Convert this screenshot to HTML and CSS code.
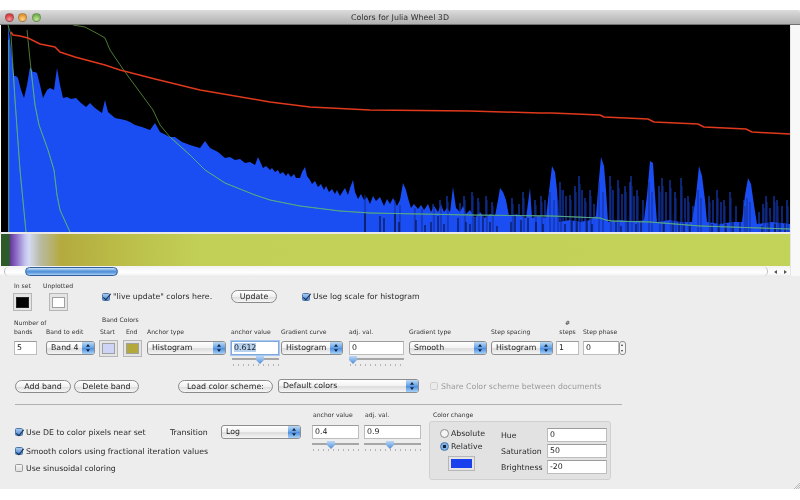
FILE: index.html
```html
<!DOCTYPE html>
<html lang="en">
<head>
<meta charset="utf-8">
<title>Colors for Julia Wheel 3D</title>
<link rel="stylesheet" href="styles.css">
</head>
<body>
<div class="window">
  <header class="titlebar">
    <div class="lights"><span class="light red"></span><span class="light amber"></span><span class="light green"></span></div>
    <div class="title">Colors for Julia Wheel 3D</div>
  </header>
  <section class="scroller">
    <div class="scroll-content">
      <svg class="plot" width="789" height="207" viewBox="1 25 789 207" aria-label="Histogram">
        <defs>
          <clipPath id="over"><polygon points="8,25 10,40 13,68 14,76 18,78 21,90 24,98 27,85 30,67 33,72 37,73 40,85 43,98 47,90 50,88 54,90 57,68 60,85 63,98 67,97 71,99 76,98 81,103 86,107 90,103 95,108 102,113 105,100 108,112 115,118 125,120 135,125 150,130 155,123 160,132 170,137 190,145 200,148 205,141 210,148 225,158 245,163 255,165 258,157 263,168 280,172 300,178 305,167 310,180 330,190 340,190 353,180 358,195 375,195 395,198 403,183 410,200 790,212 790,232 8,232"/></clipPath>
        </defs>
        <rect x="1" y="25" width="789" height="207" fill="#000"/>
        <polygon class="hist" points="8,25 10,40 13,68 14,76 16,76 18,78 21,90 24,98 27,85 30,67 33,72 35,72 37,73 40,85 43,98 47,90 50,88 54,90 57,68 60,85 63,98 67,97 71,99 76,98 81,103 86,107 90,103 95,108 102,113 105,100 108,112 115,118 120,119 125,120 130,122 135,125 142,127 150,130 155,123 160,132 170,137 175,137 182,142 190,145 200,148 205,141 210,148 218,152 225,158 230,157 235,160 240,159 245,163 250,162 255,165 258,157 263,168 266,166 270,170 272,168 275,172 278,170 280,174 283,172 286,176 288,173 291,177 294,174 296,178 300,178 302,172 305,167 307,176 310,180 312,184 315,181 318,187 321,184 324,190 326,186 329,192 332,189 335,194 337,190 340,196 343,191 345,188 348,195 350,188 353,180 355,192 358,199 361,194 364,200 367,197 370,204 373,196 376,201 380,197 384,206 387,199 390,204 393,198 397,206 400,200 403,183 406,190 408,198 411,208 414,204 418,209 421,205 424,210 428,204 431,212 434,206 438,212 441,205 444,212 447,208 450,212 453,187 456,208 460,212 463,206 466,214 470,210 475,218 480,212 485,218 490,214 495,216 498,200 500,188 503,192 506,200 509,216 516,214 526,218 530,188 532,218 538,216 546,218 548,200 552,166 555,172 557,190 559,222 570,220 580,222 590,220 596,216 598,190 601,157 604,166 606,190 608,222 620,220 632,222 644,220 647,195 650,161 653,163 655,195 657,222 670,220 680,222 692,222 696,195 699,166 702,176 705,200 707,222 720,224 732,222 742,222 745,195 748,178 751,184 754,205 757,224 772,222 790,224 790,232 8,232"/>
        <path class="bright" d="M414 205V232M421 206V232M433 204V232M440 200V232M447 196V232M460 203V232M464 196V232M472 192V232M478 198V232M486 196V232M492 202V232M512 198V232M519 204V232M523 192V232M535 200V232M541 196V232M545 200V232M560 182V232M563 190V232M566 196V232M570 195V232M575 186V232M579 176V232M582 190V232M585 198V232M590 190V232M594 204V232M610 176V232M613 190V232M618 180V232M622 194V232M625 186V232M630 182V232M631 176V232M634 196V232M637 190V232M643 200V232M659 186V232M662 178V232M666 192V232M670 180V232M675 192V232M681 178V232M685 198V232M688 196V232M693 206V232M709 196V232M713 200V232M717 190V232M721 202V232M724 200V232M730 192V232M736 206V232M744 200V232M759 212V232M763 204V232M766 196V232M770 208V232M774 196V232M777 200V232M782 206V232M787 200V232"/>
        <path class="dark" d="M365 195V232M395 200V232M400 205V232M415 208V232M422 209V232M434 208V232M441 204V232M448 202V232M465 200V232M473 196V232M479 202V232M487 200V232M493 206V232M513 204V232M524 198V232M536 205V232M542 202V232M550 192V232M554 200V232M558 200V232M561 190V232M571 200V232M576 192V232M580 184V232M586 202V232M591 196V232M599 182V232M603 192V232M611 186V232M619 188V232M626 192V232M632 186V232M638 196V232M649 182V232M652 192V232M660 192V232M663 186V232M671 188V232M676 198V232M682 186V232M689 202V232M698 190V232M701 198V232M710 202V232M718 198V232M725 206V232M731 198V232M745 206V232M747 198V232M750 202V232M764 208V232M767 202V232M775 202V232M778 206V232M788 206V232"/>
        <path class="gaps" d="M365 212V232M395 214V232M399 222V232M384 218V232M380 216V232M416 220V232M425 225V232M431 222V232M438 216V232M444 224V232M458 218V232M466 222V232M470 224V232M475 218V232M483 214V232M490 222V232M497 226V232M511 222V232M515 214V232M521 220V232M528 218V232M536 222V232M543 224V232M565 224V232M572 214V232M577 222V232M587 216V232M592 224V232M616 218V232M621 226V232M628 216V232M636 224V232M641 214V232M664 224V232M673 214V232M679 222V232M684 218V232M690 226V232M712 224V232M719 216V232M726 224V232M733 218V232M740 222V232M762 226V232M769 218V232M775 224V232M780 220V232M785 224V232"/>
        <polyline class="line-green" points="73,25 85,27 100,35 105,38 110,50 125,72 153,110 160,125 170,137 190,155 205,170 225,183 255,195 270,200 300,206 340,211 370,213 470,215 552,216 600,218 606,220 612,221 650,222 700,226 790,229"/>
        <polyline class="line-green" points="27,30 30,60 35,105 39,125 48,150 54,170 57,195 60,210 70,232"/>
        <polyline class="line-green" points="8,25 11,35 15,100 20,170 26,232"/>
        <g clip-path="url(#over)">
          <polyline class="line-teal" points="125,72 153,110 160,125 170,137 190,155 205,170 225,183 255,195 270,200 300,206 340,211 370,213 470,215 552,216 600,218 606,220 612,221 650,222 700,226 790,229"/>
          <polyline class="line-teal" points="27,30 30,60 35,105 39,125 48,150 54,170 57,195 60,210 70,232"/>
          <polyline class="line-teal" points="8,25 11,35 15,100 20,170 26,232"/>
          <path class="line-side" d="M8.5 40V232"/>
        </g>
        <polyline class="line-red" points="11,32 13,35 20,36 28,38 34,41 40,44 55,47 60,52 75,57 105,65 120,70 155,79 200,90 270,102 310,107 370,110 470,111 540,113 552,113 600,115 604,117 648,119 654,122 698,124 704,127 746,129 752,132 790,134"/>
      </svg>
      <div class="strip"></div>
      <div class="gradient"></div>
      <div class="hscroll">
        <div class="track-start"></div>
        <div class="thumb"></div>
        <div class="track-rest"></div>
        <div class="scroll-arrows"><span class="arrow-left"></span><span class="arrow-right"></span></div>
      </div>
    </div>
    <div class="v-gutter"></div>
  </section>
  <main class="panel">
    <div class="row-top">
      <div class="well-col first"><span class="lbl">In set</span><span class="well big"><i class="swatch black"></i></span></div>
      <div class="well-col second"><span class="lbl">Unplotted</span><span class="well big"><i class="swatch white"></i></span></div>
      <label class="check live"><span class="box on"></span>"live update" colors here.</label>
      <button class="btn update">Update</button>
      <label class="check logscale"><span class="box on"></span>Use log scale for histogram</label>
    </div>
    <div class="band-grid">
      <span class="lbl c-num">Number of<br>bands</span>
      <span class="lbl c-band">Band to edit</span>
      <span class="lbl c-colors"><span class="colors-head">Band Colors</span><span class="colors-sub"><span>Start</span><span>End</span></span></span>
      <span class="lbl c-anchor">Anchor type</span>
      <span class="lbl c-aval">anchor value</span>
      <span class="lbl c-gcurve">Gradient curve</span>
      <span class="lbl c-adj">adj. val.</span>
      <span class="lbl c-gtype">Gradient type</span>
      <span class="lbl c-spacing">Step spacing</span>
      <span class="lbl c-steps">#<br>steps</span>
      <span class="lbl c-phase">Step phase</span>

      <div class="field w23">5</div>
      <div class="select w49">Band 4</div>
      <div class="wells"><span class="well"><i class="swatch lav"></i></span><span class="well"><i class="swatch olive"></i></span></div>
      <div class="select w79">Histogram</div>
      <div class="field w48 focus"><span class="sel-text">0.612</span></div>
      <div class="select w62">Histogram</div>
      <div class="field w55">0</div>
      <div class="select w78">Smooth</div>
      <div class="select w62">Histogram</div>
      <div class="field w23">1</div>
      <div class="stepper-wrap"><div class="field w36">0</div><span class="stepper"></span></div>

      <div class="slider s-aval"><i class="knob k60"></i></div>
      <div class="slider s-adj"><i class="knob k5"></i></div>
    </div>
    <div class="row-actions">
      <button class="btn add">Add band</button>
      <button class="btn del">Delete band</button>
      <button class="btn load">Load color scheme:</button>
      <div class="select w141">Default colors</div>
      <label class="check share disabled"><span class="box"></span>Share Color scheme between documents</label>
    </div>
    <hr class="sep">
    <div class="row-bottom">
      <div class="checks">
        <div class="check-row">
          <label class="check de"><span class="box on"></span>Use DE to color pixels near set</label>
          <span class="transition">Transition</span>
          <div class="select w80">Log</div>
        </div>
        <label class="check smooth"><span class="box on"></span>Smooth colors using fractional iteration values</label>
        <label class="check sinus"><span class="box"></span>Use sinusoidal coloring</label>
      </div>
      <div class="mini one">
        <span class="lbl">anchor value</span>
        <div class="field w47">0.4</div>
        <div class="slider"><i class="knob k42"></i></div>
      </div>
      <div class="mini two">
        <span class="lbl">adj. val.</span>
        <div class="field w57">0.9</div>
        <div class="slider"><i class="knob k46"></i></div>
      </div>
      <div class="change">
        <span class="lbl change-title">Color change</span>
        <div class="groupbox">
          <div class="radios">
            <label class="radio"><span class="dot"></span>Absolute</label>
            <label class="radio"><span class="dot on"></span>Relative</label>
            <span class="well wide"><i class="swatch blue"></i></span>
          </div>
          <div class="hsb">
            <div class="hsb-row"><span>Hue</span><div class="field w60">0</div></div>
            <div class="hsb-row"><span>Saturation</span><div class="field w60">50</div></div>
            <div class="hsb-row"><span>Brightness</span><div class="field w60">-20</div></div>
          </div>
        </div>
      </div>
    </div>
    <svg class="grip" width="6" height="7" viewBox="0 0 6 7"><path d="M0 7L6 1M2 7L6 3M4 7L6 5" stroke="#a0a0a0" stroke-width=".7"/></svg>
  </main>
</div>
</body>
</html>
```
FILE: styles.css
```css
* { box-sizing: border-box; }
html, body { margin: 0; padding: 0; background: #fff; }
body { width: 800px; height: 500px; overflow: hidden; font-family: "DejaVu Sans", "Liberation Sans", sans-serif; font-size: 7.8px; color: #2a2a2a; }
.window { margin-top: 10px; width: 800px; height: 479px; display: flex; flex-direction: column; background: #ededed; filter: blur(.3px); }
.titlebar { height: 15px; flex: none; display: grid; grid-template-columns: 1fr; align-items: center; background: linear-gradient(#dcdcdc, #b0b0b0); border-bottom: 1px solid #707070; border-radius: 3px 3px 0 0; }
.lights, .title { grid-area: 1 / 1; }
.lights { display: flex; gap: 4.4px; padding-left: 5px; }
.light { width: 9px; height: 9px; border-radius: 50%; border: 1px solid rgba(90,90,90,.45); }
.red { background: radial-gradient(circle at 50% 75%, #f59a9a, #d8383c 70%); }
.amber { background: radial-gradient(circle at 50% 75%, #fbd78a, #e8942c 70%); }
.green { background: radial-gradient(circle at 50% 75%, #c4e59a, #72b34a 70%); }
.title { text-align: center; color: #303030; font-size: 7.9px; }

.scroller { display: flex; flex: none; height: 251px; background: #fafafa; }
.scroll-content { width: 790px; padding-top: 0; }
.v-gutter { width: 10px; background: #f8f8f8; border-left: 1px solid #e6e6e6; }
.plot { display: block; margin-left: 1px; }
.hist { fill: #1a4df2; }
.bright { stroke: #1b48e6; stroke-width: 1; fill: none; }
.dark { stroke: #122c90; stroke-width: 1; fill: none; }
.gaps { stroke: #050a24; stroke-width: 1; fill: none; }
.line-green { stroke: #5f9a3c; stroke-width: .8; fill: none; }
.line-teal { stroke: #52b0a4; stroke-width: .8; fill: none; }
.line-side { stroke: #4a8aa6; stroke-width: 1.6; fill: none; }
.line-red { stroke: #e0391c; stroke-width: 1.5; fill: none; }
.strip { height: 2px; background: #e8e8e8; }
.gradient { height: 32px; margin-left: 1px; background: linear-gradient(90deg, #2e5a2a 0, #2e5a2a 8px, #6b3ea6 10px, #8a68c4 15px, #c3c3f0 24px, #d4daf2 28px, #b8baa0 40px, #b4aa3e 60px, #bcc04a 130px, #c2d058 200px, #c3d259 100%); }
.hscroll { height: 11px; display: flex; align-items: stretch; padding-top: 1px; padding-bottom: 1px; background: linear-gradient(#f2f2f2, #ffffff 60%, #e8e8e8); }
.track-start { width: 25px; border-radius: 5px 0 0 5px; border-left: 1px solid #bbb; margin-left: 4px; margin-right: -4px; }
.thumb { width: 93px; border-radius: 5px; margin-left: 0; background: linear-gradient(#cfe4f8, #6fa8e2 35%, #4d8cd8 55%, #a8d0f2); border: 1px solid #2f5f9e; }
.track-rest { flex: 1; border-right: 1px solid #bbb; border-radius: 0 5px 5px 0; margin-right: 2px; }
.scroll-arrows { width: 20px; display: flex; align-items: center; justify-content: space-around; }
.arrow-left { border-right: 3px solid #555; border-top: 2px solid transparent; border-bottom: 2px solid transparent; }
.arrow-right { border-left: 3px solid #555; border-top: 2px solid transparent; border-bottom: 2px solid transparent; }

.panel { flex: 1; position: relative; }
.lbl { font-size: 6.1px; color: #333; line-height: 8.5px; }

.row-top { display: flex; align-items: flex-start; height: 45px; padding-top: 6px; }
.well-col { display: flex; flex-direction: column; align-items: flex-start; gap: 2.5px; }
.well-col.first { margin-left: 14px; width: 29px; }
.well-col.first .well { margin-left: -1px; }
.well-col.second { margin-left: 0; width: 59px; }
.well-col.second .well { margin-left: 6px; }
.well { display: inline-flex; align-items: center; justify-content: center; width: 19px; height: 17px; background: #e4e4e4; border: 1px solid #b6b6b6; flex: none; }
.well.big { width: 19px; height: 18px; }
.swatch { display: block; width: 13px; height: 11px; border: 1px solid #a0a0a0; }
.black { background: #000; border-color: #222; }
.white { background: #fff; }
.lav { background: #cdd4f5; }
.olive { background: #b3a93a; }
.blue { background: #1a40ee; border-color: #1a40ee; width: 21px; height: 9px; }
.well.wide { width: 27px; height: 15px; }

.check { display: flex; align-items: center; gap: 3px; white-space: nowrap; font-size: 7.8px; }
.box { width: 8px; height: 8px; flex: none; border-radius: 1.5px; border: 1px solid #9a9a9a; background: linear-gradient(#f4f4f4, #dedede); position: relative; }
.box.on { background: linear-gradient(#a6c8ee, #4d8cd8); border-color: #4f76a8; }
.box.on::after { content: ""; position: absolute; left: 2px; top: -1.5px; width: 3px; height: 7px; border: solid #142a48; border-width: 0 1.4px 1.4px 0; transform: rotate(40deg); }
.check.live { margin-left: 0; margin-top: 10px; width: 129px; }
.btn { font: inherit; font-size: 7.9px; color: #2a2a2a; height: 13px; padding: 0; border: 1px solid #8a8a8a; border-radius: 7px; background: linear-gradient(#ffffff, #f0f0f0 50%, #dedede 55%, #f6f6f6); }
.update { width: 46px; margin-top: 8px; }
.check.logscale { margin-left: 25px; margin-top: 10px; }

.band-grid { display: grid; grid-template-columns: 32px 54px 47px 84px 50px 68px 60px 82px 65px 27px 44px; grid-template-rows: 20px 16px 12px; margin-left: 14px; height: 48px; margin-top: 0; }
.band-grid > .lbl { align-self: end; padding-bottom: 5px; white-space: nowrap; }
.c-colors { display: flex; flex-direction: column; }
.colors-head { margin-left: 2px; margin-bottom: 3.5px; }
.colors-sub { display: flex; gap: 11px; }
.c-steps { text-align: center; padding-right: 4px; }
.field { height: 14px; border: 1px solid #bdbdbd; border-top-color: #9c9c9c; background: #fff; font-size: 7.8px; line-height: 12px; padding-left: 2px; color: #222; flex: none; }
.w23 { width: 23px; }
.w36 { width: 36px; }
.w47 { width: 47px; }
.w48 { width: 48px; }
.w55 { width: 55px; }
.w57 { width: 57px; }
.w60 { width: 60px; }
.field.focus { border-color: #7fa9dc; box-shadow: 0 0 0 1px #a8c8ee; }
.sel-text { background: #b6d2f0; }
.select { height: 14px; border: 1px solid #8e8e8e; border-radius: 3px; background: linear-gradient(#ffffff, #f2f2f2 50%, #dcdcdc 55%, #f6f6f6); font-size: 7.8px; line-height: 12px; padding-left: 4px; color: #222; position: relative; flex: none; }
.select::after { content: ""; position: absolute; right: 0; top: 0; bottom: 0; width: 12px; border-radius: 0 2px 2px 0; background-image: linear-gradient(#bcd9f6, #6aa6e6 45%, #4f90e0 55%, #a8d2f6); }
.select::before { content: ""; position: absolute; right: 4px; top: 2px; width: 4px; height: 8px; background: #10233f; clip-path: polygon(50% 0, 100% 35%, 0 35%, 50% 0, 50% 100%, 0 65%, 100% 65%, 50% 100%); z-index: 1; }
.w49 { width: 49px; }
.w62 { width: 62px; }
.w78 { width: 78px; }
.w79 { width: 79px; }
.w80 { width: 80px; }
.w141 { width: 141px; }
.wells { display: flex; gap: 5px; margin-left: -1px; margin-top: -1px; }
.stepper-wrap { display: flex; }
.stepper { width: 7px; height: 14px; border: 1px solid #8e8e8e; border-radius: 3px; background: #f4f4f4; position: relative; }
.stepper::before { content: ""; position: absolute; left: 1px; top: 2px; border: 1.5px solid transparent; border-bottom: 2px solid #333; border-top: 0; }
.stepper::after { content: ""; position: absolute; left: 1px; bottom: 2px; border: 1.5px solid transparent; border-top: 2px solid #333; border-bottom: 0; }
.slider { height: 11px; position: relative; margin-top: 3px; background: linear-gradient(#a6a6a6, #a6a6a6) 0 1px / 100% 2px no-repeat, repeating-linear-gradient(90deg, #b4b4b4 0, #b4b4b4 1px, transparent 1px, transparent 5px) 1px 7px / 100% 2px no-repeat; border-radius: 1px; }
.knob { position: absolute; top: -1px; width: 8px; height: 8px; background: linear-gradient(#bcd9f6, #4d8cd8); clip-path: polygon(0 0, 100% 0, 100% 50%, 50% 100%, 0 50%); }
.k60 { left: 24px; }
.k5 { left: 0; }
.k42 { left: 15px; }
.k46 { left: 22px; }
.s-aval { grid-column: 5; grid-row: 3; width: 47px; margin-left: 1px; margin-top: 0; }
.s-adj { grid-column: 7; grid-row: 3; width: 55px; margin-top: 0; }

.row-actions { display: flex; align-items: center; height: 16px; margin-top: 9px; padding-left: 15px; }
.add { width: 56px; }
.del { width: 65px; margin-left: 3px; }
.load { width: 95px; margin-left: 39px; }
.w141 { margin-left: 5px; }
.share { margin-left: 11px; }
.disabled { color: #9a9a9a; }
.disabled .box { background: #eaeaea; border-color: #cfcfcf; }
.sep { border: 0; height: 1px; background: #b0b0b0; width: 607px; margin: 10px 0 0 15px; }

.row-bottom { display: flex; margin-top: 5px; align-items: flex-start; }
.checks { width: 312px; padding-left: 15px; display: flex; flex-direction: column; padding-top: 15px; }
.check-row { display: flex; align-items: center; height: 14px; }
.de { width: 155px; }
.transition { width: 51px; }
.smooth { margin-top: 6px; height: 12px; }
.sinus { margin-top: 5px; height: 12px; }
.mini { display: flex; flex-direction: column; align-items: flex-start; }
.mini .lbl { height: 15px; line-height: 10px; padding-left: 1px; }
.mini .slider { width: 100%; }
.mini.one { width: 47px; margin-right: 5px; }
.mini.two { width: 57px; margin-right: 8px; }
.change { display: flex; flex-direction: column; }
.change-title { height: 11px; line-height: 10px; padding-left: 4px; }
.groupbox { width: 182px; height: 59px; margin-top: 0; background: #e2e2e2; border: 1px solid #d0d0d0; border-radius: 3px; display: flex; padding: 5px 3px 0 10px; }
.radios { width: 61px; display: flex; flex-direction: column; }
.radio { display: flex; align-items: center; gap: 2px; height: 13px; font-size: 7.8px; }
.dot { width: 9px; height: 9px; border-radius: 50%; border: 1px solid #8c8c8c; background: #f4f4f4; flex: none; position: relative; }
.dot.on { background: radial-gradient(circle, #14233c 1.4px, #7fb0e6 1.8px); border-color: #4f76a8; }
.radios .well { margin: 3px 0 0 8px; }
.hsb { flex: 1; display: flex; flex-direction: column; gap: 2px; padding-top: 1px; }
.hsb-row { display: flex; align-items: center; justify-content: space-between; height: 14px; font-size: 7.8px; }
.grip { position: absolute; right: 0; bottom: 0; }
```
